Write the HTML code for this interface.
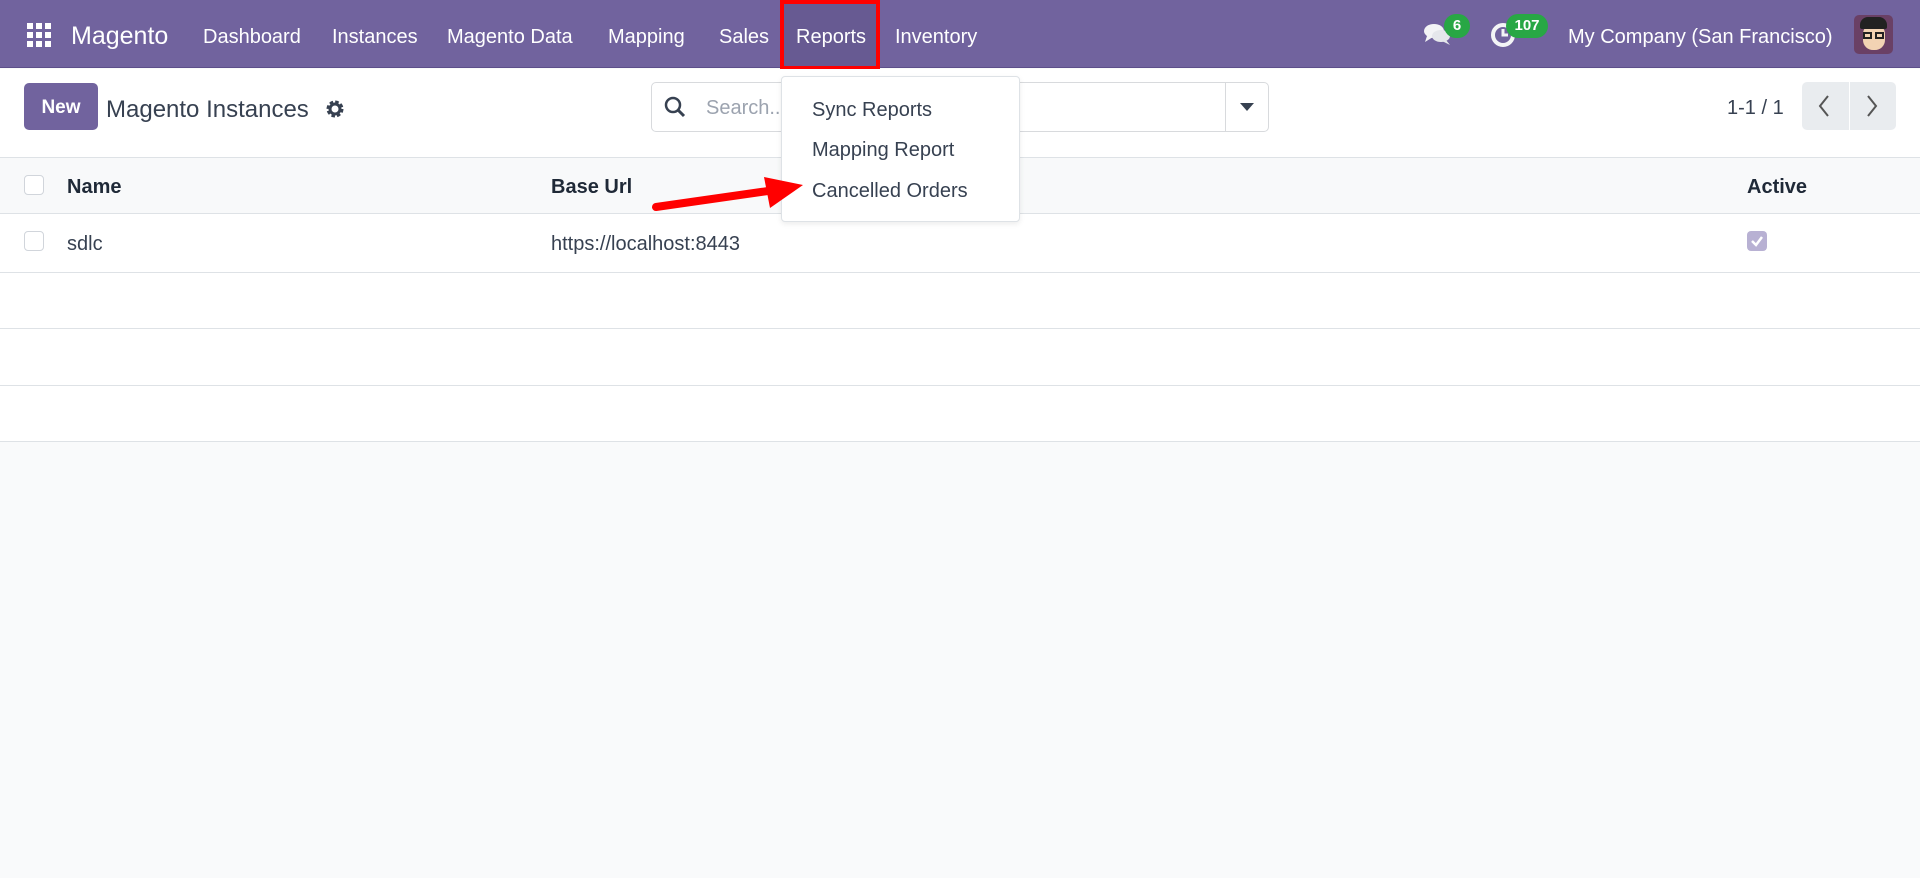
<!DOCTYPE html>
<html><head><meta charset="utf-8"><style>
*{box-sizing:border-box;margin:0;padding:0}
body{width:1920px;height:878px;overflow:hidden;background:#f9fafb;font-family:"Liberation Sans",sans-serif;color:#374151;position:relative}
.a{position:absolute}
.nav{left:0;top:0;width:1920px;height:68px;background:#71639e;border-bottom:1px solid #5d4f8a}
.nt{color:#fff;font-size:20px;top:26px;white-space:nowrap}
.cp{left:0;top:69px;width:1920px;height:89px;background:#fff;border-bottom:1px solid #dee2e6}
.row{left:0;width:1920px;background:#fff;border-bottom:1px solid #dee2e6}
.cb{width:20px;height:20px;border:1px solid #d1d5db;border-radius:4px;background:#fff}
.badge{background:#28a745;color:#fff;font-size:15px;font-weight:bold;border-radius:12px;height:24px;line-height:24px;text-align:center}
.dd{font-size:20px;color:#374151}
</style></head><body>
<div class="a nav"></div>
<svg class="a" style="left:27px;top:23px" width="24" height="24" viewBox="0 0 24 24" fill="#fff">
<rect x="0" y="0" width="6" height="6"/><rect x="9" y="0" width="6" height="6"/><rect x="18" y="0" width="6" height="6"/>
<rect x="0" y="9" width="6" height="6"/><rect x="9" y="9" width="6" height="6"/><rect x="18" y="9" width="6" height="6"/>
<rect x="0" y="18" width="6" height="6"/><rect x="9" y="18" width="6" height="6"/><rect x="18" y="18" width="6" height="6"/></svg>
<div class="a nt" style="left:71px;top:22px;font-size:25px">Magento</div>
<div class="a nt" style="left:203px">Dashboard</div>
<div class="a nt" style="left:332px">Instances</div>
<div class="a nt" style="left:447px">Magento Data</div>
<div class="a nt" style="left:608px">Mapping</div>
<div class="a nt" style="left:719px">Sales</div>
<div class="a" style="left:780px;top:0;width:100px;height:70px;background:#675a92;border:4px solid #f00"></div>
<div class="a nt" style="left:796px">Reports</div>
<div class="a nt" style="left:895px">Inventory</div>
<svg class="a" style="left:1424px;top:22px" width="28" height="24" viewBox="0 0 28 24" fill="#f3f4f6">
<ellipse cx="10" cy="9" rx="10" ry="7"/><path d="M3 14 L1 20 L9 15Z"/><ellipse cx="17" cy="14" rx="9" ry="6" fill="#e5e7eb"/><path d="M22 18 L26 23 L18 19Z" fill="#e5e7eb"/></svg>
<div class="a badge" style="left:1444px;top:14px;width:26px">6</div>
<svg class="a" style="left:1490px;top:20px" width="26" height="28" viewBox="0 0 26 28"><circle cx="13" cy="15" r="10" fill="none" stroke="#f3f4f6" stroke-width="4"/><path d="M13 9 V15 H18" stroke="#f3f4f6" stroke-width="3" fill="none"/></svg>
<div class="a badge" style="left:1506px;top:14px;width:42px">107</div>
<div class="a nt" style="left:1568px">My Company (San Francisco)</div>
<div class="a" style="left:1854px;top:15px;width:39px;height:39px;border-radius:5px;background:#6a4065;overflow:hidden">
<div class="a" style="left:9px;top:9px;width:22px;height:26px;border-radius:10px;background:#f2d3b3"></div>
<div class="a" style="left:6px;top:2px;width:27px;height:12px;border-radius:8px 8px 2px 2px;background:#222"></div>
<div class="a" style="left:9px;top:17px;width:9px;height:7px;border:2px solid #222"></div>
<div class="a" style="left:21px;top:17px;width:9px;height:7px;border:2px solid #222"></div>
</div>

<div class="a cp"></div>
<div class="a" style="left:24px;top:83px;width:74px;height:47px;background:#71639e;border-radius:5px;color:#fff;font-weight:bold;font-size:19px;line-height:49px;text-align:center">New</div>
<div class="a" style="left:106px;top:96px;font-size:24px;color:#374151">Magento Instances</div>
<svg class="a" style="left:325px;top:99px" width="20" height="20" viewBox="0 0 20 20"><circle cx="10" cy="10" r="6.5" fill="none" stroke="#374151" stroke-width="4" stroke-dasharray="3.2 1.9"/><circle cx="10" cy="10" r="5" fill="none" stroke="#374151" stroke-width="3"/></svg>
<div class="a" style="left:651px;top:82px;width:618px;height:50px;border:1px solid #d8dadd;border-radius:5px;background:#fff"></div>
<div class="a" style="left:1225px;top:83px;width:1px;height:48px;background:#d8dadd"></div>
<svg class="a" style="left:664px;top:96px" width="22" height="22" viewBox="0 0 22 22"><circle cx="9" cy="9" r="7" fill="none" stroke="#374151" stroke-width="2.5"/><path d="M14 14 L20 20" stroke="#374151" stroke-width="3"/></svg>
<div class="a" style="left:706px;top:97px;font-size:20px;color:#9ca3af">Search...</div>
<svg class="a" style="left:1240px;top:103px" width="14" height="8"><path d="M0 0 H14 L7 8Z" fill="#374151"/></svg>
<div class="a" style="left:1727px;top:97px;font-size:20px">1-1 / 1</div>
<div class="a" style="left:1802px;top:82px;width:94px;height:48px;background:#e9ecef;border-radius:5px"></div>
<div class="a" style="left:1849px;top:82px;width:1px;height:48px;background:#fff"></div>
<svg class="a" style="left:1816px;top:94px" width="70" height="24"><path d="M12 2 L4 12 L12 22" stroke="#555" stroke-width="2" fill="none"/><path d="M52 2 L60 12 L52 22" stroke="#555" stroke-width="2" fill="none"/></svg>

<div class="a row" style="top:158px;height:56px;background:#f8f9fa"></div>
<div class="a cb" style="left:24px;top:175px"></div>
<div class="a" style="left:67px;top:176px;font-size:20px;font-weight:bold;color:#1f2937">Name</div>
<div class="a" style="left:551px;top:176px;font-size:20px;font-weight:bold;color:#1f2937">Base Url</div>
<div class="a" style="left:1747px;top:176px;font-size:20px;font-weight:bold;color:#1f2937">Active</div>
<div class="a row" style="top:214px;height:59px"></div>
<div class="a cb" style="left:24px;top:231px"></div>
<div class="a" style="left:67px;top:233px;font-size:20px">sdlc</div>
<div class="a" style="left:551px;top:233px;font-size:20px">https://localhost:8443</div>
<div class="a" style="left:1747px;top:231px;width:20px;height:20px;border-radius:4px;background:#b8b1d3"></div>
<svg class="a" style="left:1750px;top:235px" width="14" height="12"><path d="M2 6 L6 10 L12 2" stroke="#fff" stroke-width="2.5" fill="none"/></svg>
<div class="a row" style="top:273px;height:56px"></div>
<div class="a row" style="top:329px;height:57px"></div>
<div class="a row" style="top:386px;height:56px"></div>

<div class="a" style="left:781px;top:76px;width:239px;height:146px;background:#fff;border:1px solid #dee2e6;border-radius:4px;box-shadow:0 2px 6px rgba(0,0,0,.08)"></div>
<div class="a dd" style="left:812px;top:99px">Sync Reports</div>
<div class="a dd" style="left:812px;top:139px">Mapping Report</div>
<div class="a dd" style="left:812px;top:180px">Cancelled Orders</div>
<svg class="a" style="left:650px;top:175px" width="160" height="40"><path d="M6 32 L118 16" stroke="#f00" stroke-width="8" stroke-linecap="round"/><path d="M114 2 L153 10 L120 33Z" fill="#f00"/></svg>
</body></html>
